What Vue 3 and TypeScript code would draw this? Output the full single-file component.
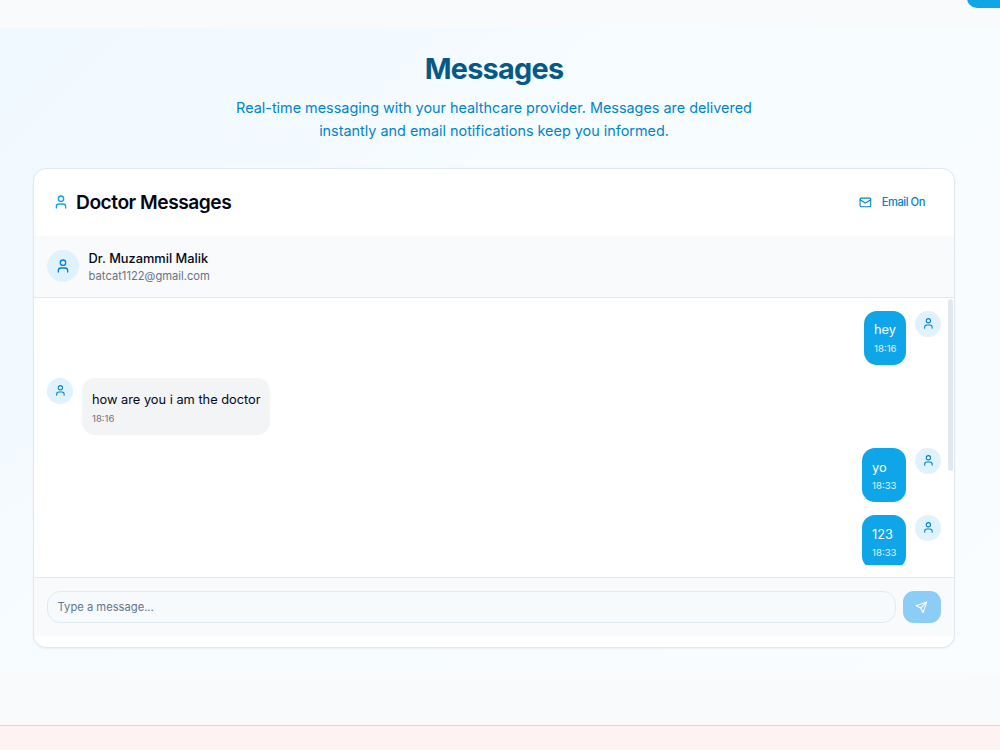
<script setup lang="ts">
interface Message {
  id: number
  text: string
  time: string
  mine: boolean
}

const messages: Message[] = [
  { id: 1, text: 'hey', time: '18:16', mine: true },
  { id: 2, text: 'how are you i am the doctor', time: '18:16', mine: false },
  { id: 3, text: 'yo', time: '18:33', mine: true },
  { id: 4, text: '123', time: '18:33', mine: true },
]
</script>

<template>
  <div class="page">
    <button class="corner-button" aria-label="Open"></button>
    <section class="section">
      <h1>Messages</h1>
      <p class="subtitle">
        Real-time messaging with your healthcare provider. Messages are delivered<br />instantly and email notifications keep you informed.
      </p>
      <div class="card">
        <header class="card-header">
          <svg class="icon title-icon" viewBox="0 0 24 24"><circle cx="12" cy="7" r="4" /><path d="M19 21v-2a4 4 0 0 0-4-4H9a4 4 0 0 0-4 4v2" /></svg>
          <h2>Doctor Messages</h2>
          <div class="email">
            <svg class="icon mail-icon" viewBox="0 0 24 24"><rect x="2" y="4" width="20" height="16" rx="2" /><path d="m22 7-8.97 5.7a1.94 1.94 0 0 1-2.06 0L2 7" /></svg>
            <span>Email On</span>
          </div>
        </header>
        <div class="contact">
          <div class="avatar large">
            <svg class="icon" viewBox="0 0 24 24"><circle cx="12" cy="7" r="4" /><path d="M19 21v-2a4 4 0 0 0-4-4H9a4 4 0 0 0-4 4v2" /></svg>
          </div>
          <div>
            <div class="name">Dr. Muzammil Malik</div>
            <div class="address">batcat1122@gmail.com</div>
          </div>
        </div>
        <div class="thread">
          <div class="list">
            <div v-for="m in messages" :key="m.id" class="row" :class="{ mine: m.mine }">
              <div class="avatar">
                <svg class="icon" viewBox="0 0 24 24"><circle cx="12" cy="7" r="4" /><path d="M19 21v-2a4 4 0 0 0-4-4H9a4 4 0 0 0-4 4v2" /></svg>
              </div>
              <div class="bubble">
                <div class="text">{{ m.text }}</div>
                <div class="time">{{ m.time }}</div>
              </div>
            </div>
          </div>
          <div class="scroll-thumb"></div>
        </div>
        <footer class="composer">
          <input type="text" placeholder="Type a message..." />
          <button class="send" aria-label="Send">
            <svg class="icon" viewBox="0 0 24 24"><path d="m22 2-7 20-4-9-9-4Z" /><path d="M22 2 11 13" /></svg>
          </button>
        </footer>
      </div>
    </section>
    <div class="alert"></div>
  </div>
</template>

<style>
body {
  margin: 0;
  overflow: hidden;
}
</style>

<style scoped>
.page {
  position: relative;
  box-sizing: border-box;
  height: 750px;
  padding-top: 28px;
  overflow: hidden;
  background: #f8fafc;
  font-family: Inter, "Liberation Sans", sans-serif;
  color: #020817;
}
.corner-button {
  position: absolute;
  top: -24px;
  right: -20px;
  width: 53px;
  height: 32px;
  border: 0;
  border-radius: 10px;
  background: #0ea5e9;
}
.section {
  box-sizing: border-box;
  height: 645px;
  padding: 22px 45px 0 33px;
  background: linear-gradient(135deg, #f0f9ff 0%, #f7fcff 50%, #fafdff 100%);
}
.icon {
  display: block;
  flex: none;
  width: 12.8px;
  height: 12.8px;
  fill: none;
  stroke: currentColor;
  stroke-width: 2;
  stroke-linecap: round;
  stroke-linejoin: round;
}
h1 {
  margin: 0;
  height: 38px;
  font-size: 28.8px;
  line-height: 38px;
  font-weight: 700;
  letter-spacing: -0.72px;
  text-align: center;
  color: #075985;
}
.subtitle {
  margin: 8px 0 0;
  height: 72px;
  font-size: 14.4px;
  line-height: 23px;
  text-align: center;
  color: #0284c7;
}
.card {
  box-sizing: border-box;
  height: 480px;
  border: 1px solid #e2e8f0;
  border-radius: 13px;
  background: #fff;
  box-shadow: 0 1px 2px rgba(0, 0, 0, 0.05);
  overflow: hidden;
}
.card-header {
  box-sizing: border-box;
  display: flex;
  align-items: center;
  height: 67px;
  padding: 0 29px 1px 19px;
}
.title-icon {
  width: 16px;
  height: 16px;
  margin-right: 7px;
  color: #0ea5e9;
}
h2 {
  margin: 0;
  font-size: 19.2px;
  line-height: 24px;
  font-weight: 600;
  letter-spacing: -0.48px;
}
.email {
  display: flex;
  align-items: center;
  gap: 10px;
  margin-left: auto;
  font-size: 11.2px;
  font-weight: 500;
  letter-spacing: -0.45px;
  color: #0284c7;
}
.contact {
  box-sizing: border-box;
  display: flex;
  align-items: center;
  gap: 9.6px;
  height: 62px;
  padding: 0 13px 1px;
  border-bottom: 1px solid #e2e8f0;
  background: #f8fafc;
}
.name {
  padding-top: 2px;
  font-size: 12.8px;
  line-height: 18px;
  font-weight: 500;
}
.address {
  font-size: 11.2px;
  line-height: 17px;
  color: #6b7280;
}
.avatar {
  display: flex;
  flex: none;
  align-items: center;
  justify-content: center;
  width: 26px;
  height: 26px;
  border-radius: 50%;
  background: #e0f2fe;
  color: #0284c7;
}
.avatar .icon {
  width: 12.8px;
  height: 12.8px;
  margin-bottom: 1px;
}
.avatar.large {
  width: 32px;
  height: 32px;
}
.avatar.large .icon {
  width: 16px;
  height: 16px;
  margin: 0;
}
.thread {
  position: relative;
  box-sizing: border-box;
  height: 279px;
  padding: 13px;
}
.list {
  display: flex;
  flex-direction: column;
  gap: 13px;
  height: 254px;
  overflow: hidden;
}
.row {
  display: flex;
  flex: none;
  align-items: flex-start;
  gap: 9px;
}
.row.mine {
  flex-direction: row-reverse;
}
.bubble {
  box-sizing: border-box;
  height: 57px;
  padding: 12px 9.5px 0 10px;
  border-radius: 13px;
  background: #f3f4f6;
}
.mine .bubble {
  height: 54px;
  padding-top: 9px;
  background: #0ea5e9;
  color: #fff;
}
.text {
  font-size: 12.8px;
  line-height: 20px;
}
.row:nth-child(n + 3) .text {
  padding-top: 1px;
  margin-bottom: -1px;
}
.time {
  margin-top: 1px;
  font-size: 9.6px;
  line-height: 15px;
  color: #6b7280;
}
.mine .time {
  color: #e0f2fe;
}
.scroll-thumb {
  position: absolute;
  top: 1px;
  right: 1px;
  width: 5px;
  height: 172px;
  border-radius: 3px;
  background: #e2e8f0;
}
.composer {
  box-sizing: border-box;
  display: flex;
  gap: 7px;
  height: 59px;
  padding: 13px 13px 0;
  border-top: 1px solid #e2e8f0;
  background: #f8fafc;
}
.composer input {
  box-sizing: border-box;
  flex: 1;
  height: 32px;
  padding: 0 9.6px;
  border: 1px solid #e0e8f0;
  border-radius: 13px;
  background: #f6fafd;
  font: 11.2px Inter, "Liberation Sans", sans-serif;
}
.composer input::placeholder {
  color: #64748b;
}
.send {
  display: flex;
  align-items: center;
  justify-content: center;
  width: 38px;
  height: 32px;
  padding: 0 1px 0 0;
  border: 0;
  border-radius: 11px;
  background: #8bcdf7;
  color: #fff;
}
.alert {
  height: 40px;
  margin-top: 52px;
  border-top: 1px solid #fecaca;
  background: #fef2f2;
}
</style>
